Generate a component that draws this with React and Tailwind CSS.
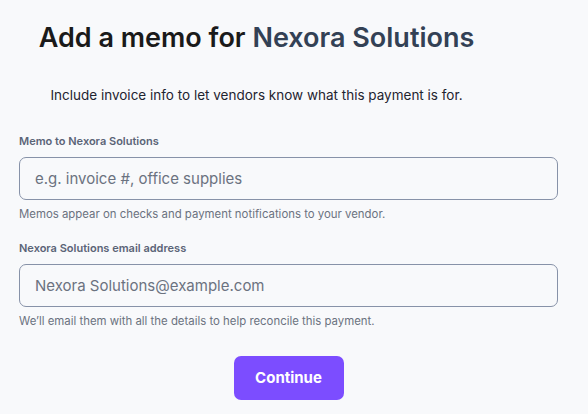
import React from 'react';

const font = { fontFamily: 'Inter, "Noto Sans", sans-serif' };

function Field({ label, placeholder, help }) {
  return (
    <div>
      <label className="block text-[11px] font-semibold text-[#5b6477] leading-[16px] mb-[8px]">{label}</label>
      <input
        type="text"
        placeholder={placeholder}
        className="w-full h-[43px] rounded-[7px] border border-[#8792a8] bg-transparent px-[15px] text-[15px] text-[#1f2937] placeholder:text-[#6b7280] outline-none"
      />
      <p className="mt-[7px] text-[11.4px] text-[#6b7280] leading-[14px]">{help}</p>
    </div>
  );
}

export default function App() {
  return (
    <div className="min-h-[414px] w-full bg-[#f8f9fb] pl-[19px] pr-[30px] pt-[18px]" style={font}>
      <h1 className="pr-[64px] text-center text-[27px] font-semibold leading-[40px] text-[#1a1a1a]">
        Add a memo for <span className="text-[#334155]">Nexora Solutions</span>
      </h1>
      <p className="mt-[26px] pr-[64px] text-center text-[13.5px] leading-[22px] text-[#1f2430]">
        Include invoice info to let vendors know what this payment is for.
      </p>
      <div className="mt-[27px] flex flex-col gap-[19px]">
        <Field label="Memo to Nexora Solutions" placeholder="e.g. invoice #, office supplies" help="Memos appear on checks and payment notifications to your vendor." />
        <Field label="Nexora Solutions email address" placeholder="Nexora Solutions@example.com" help="We’ll email them with all the details to help reconcile this payment." />
      </div>
      <div className="mt-[28px] flex justify-center">
        <button className="h-[44px] w-[110px] rounded-[7px] bg-[#7c4dff] text-[15px] font-bold text-white">Continue</button>
      </div>
    </div>
  );
}
